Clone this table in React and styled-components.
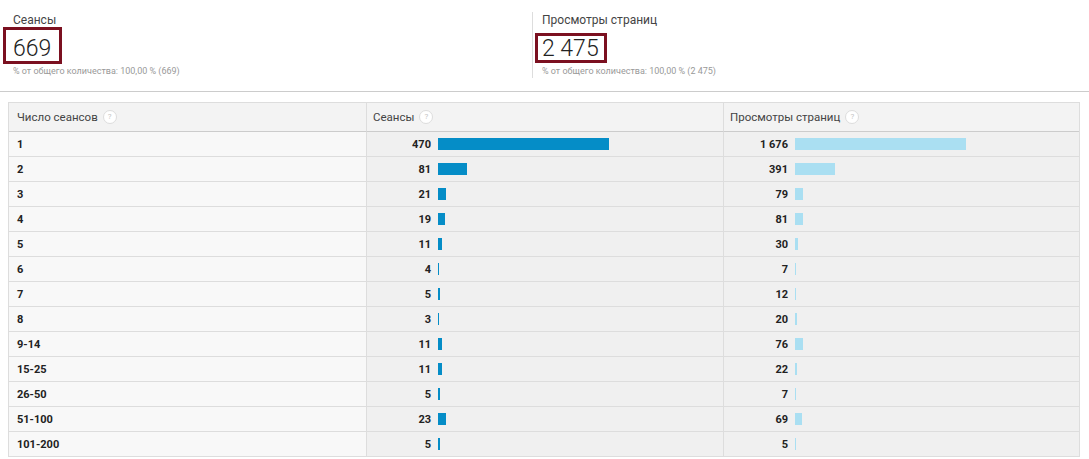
import React from 'react';
import styled, { createGlobalStyle } from 'styled-components';

const GlobalStyle = createGlobalStyle`
  body {
    margin: 0;
    background: #fff;
    font-family: Roboto, "Liberation Sans", Arial, sans-serif;
    color: #222;
  }
`;

const Summary = styled.div`
  display: flex;
  align-items: flex-start;
  height: 92px;
  padding-top: 12px;
  border-bottom: 1px solid #ccc;
  box-sizing: border-box;
`;

const Metric = styled.div`
  width: ${(p) => p.width}px;
  box-sizing: border-box;
  height: ${(p) => (p.divided ? 66 : 70)}px;
  padding: ${(p) => (p.divided ? '1px 0 0 9px' : '1px 0 0 13px')};
  border-left: ${(p) => (p.divided ? '1px solid #ddd' : 'none')};
`;

const MetricLabel = styled.div`
  font-size: 12px;
  line-height: 14px;
  color: #444;
`;

const MetricValue = styled.div`
  position: relative;
  font-size: 23px;
  font-weight: 300;
  line-height: 28px;
  margin-top: 8px;
  color: #222;
  &::after {
    content: '';
    position: absolute;
    left: ${(p) => p.boxLeft}px;
    top: ${(p) => p.boxTop}px;
    width: ${(p) => p.boxWidth}px;
    height: ${(p) => p.boxHeight}px;
    border: 3px solid #7b1020;
    box-sizing: border-box;
  }
`;

const MetricNote = styled.div`
  font-size: 9px;
  line-height: 12px;
  color: #999;
  margin-top: 2px;
`;

const Table = styled.div`
  margin: 10px 9px 0 8px;
  border: 1px solid #ddd;
  border-bottom: none;
  display: grid;
  grid-template-columns: 357px 357px 356px;
`;

const HeadCell = styled.div`
  height: 28px;
  display: flex;
  align-items: center;
  padding-left: ${(p) => (p.first ? 8 : 6)}px;
  background: #f3f3f3;
  border-bottom: 1px solid #ccc;
  border-left: ${(p) => (p.first ? 'none' : '1px solid #ddd')};
  font-size: 11.5px;
  color: #444;
`;

const Help = styled.span`
  display: inline-flex;
  align-items: center;
  justify-content: center;
  width: 12px;
  height: 12px;
  margin-left: 5px;
  border: 1px solid #ddd;
  border-radius: 50%;
  background: #fff;
  color: #c4c4c4;
  font-size: 8px;
  line-height: 1;
`;

const Cell = styled.div`
  height: 24px;
  display: flex;
  align-items: center;
  border-bottom: 1px solid #ddd;
  border-left: ${(p) => (p.first ? 'none' : '1px solid #ddd')};
  background: ${(p) => (p.first ? '#f8f8f8' : '#f0f0f0')};
  padding-left: ${(p) => (p.first ? 8 : 0)}px;
  font-size: 11px;
  font-weight: 700;
  color: #222;
`;

const Num = styled.span`
  width: 64px;
  text-align: right;
  margin-right: 7px;
`;

const Bar = styled.span`
  height: 12px;
  background: ${(p) => p.color};
`;

const rows = [
  ['1', 470, 1676],
  ['2', 81, 391],
  ['3', 21, 79],
  ['4', 19, 81],
  ['5', 11, 30],
  ['6', 4, 7],
  ['7', 5, 12],
  ['8', 3, 20],
  ['9-14', 11, 76],
  ['15-25', 11, 22],
  ['26-50', 5, 7],
  ['51-100', 23, 69],
  ['101-200', 5, 5],
];

const fmt = (n) => String(n).replace(/\B(?=(\d{3})+(?!\d))/g, ' ');

function BarCell({ value, max, color }) {
  const w = Math.max(1, Math.round((value / max) * 171));
  return (
    <Cell>
      <Num>{fmt(value)}</Num>
      <Bar color={color} style={{ width: w }} />
    </Cell>
  );
}

export default function App() {
  return (
    <>
      <GlobalStyle />
      <Summary>
        <Metric width={532}>
          <MetricLabel>Сеансы</MetricLabel>
          <MetricValue boxLeft={-10} boxTop={-8} boxWidth={59} boxHeight={37}>
            669
          </MetricValue>
          <MetricNote>% от общего количества: 100,00 % (669)</MetricNote>
        </Metric>
        <Metric width={557} divided>
          <MetricLabel>Просмотры страниц</MetricLabel>
          <MetricValue boxLeft={-7} boxTop={-2} boxWidth={72} boxHeight={30}>
            2 475
          </MetricValue>
          <MetricNote>% от общего количества: 100,00 % (2 475)</MetricNote>
        </Metric>
      </Summary>
      <Table>
        <HeadCell first>
          Число сеансов<Help>?</Help>
        </HeadCell>
        <HeadCell>
          Сеансы<Help>?</Help>
        </HeadCell>
        <HeadCell>
          Просмотры страниц<Help>?</Help>
        </HeadCell>
        {rows.map(([label, s, p]) => (
          <React.Fragment key={label}>
            <Cell first>{label}</Cell>
            <BarCell value={s} max={470} color="#058dc7" />
            <BarCell value={p} max={1676} color="#aadff2" />
          </React.Fragment>
        ))}
      </Table>
    </>
  );
}
